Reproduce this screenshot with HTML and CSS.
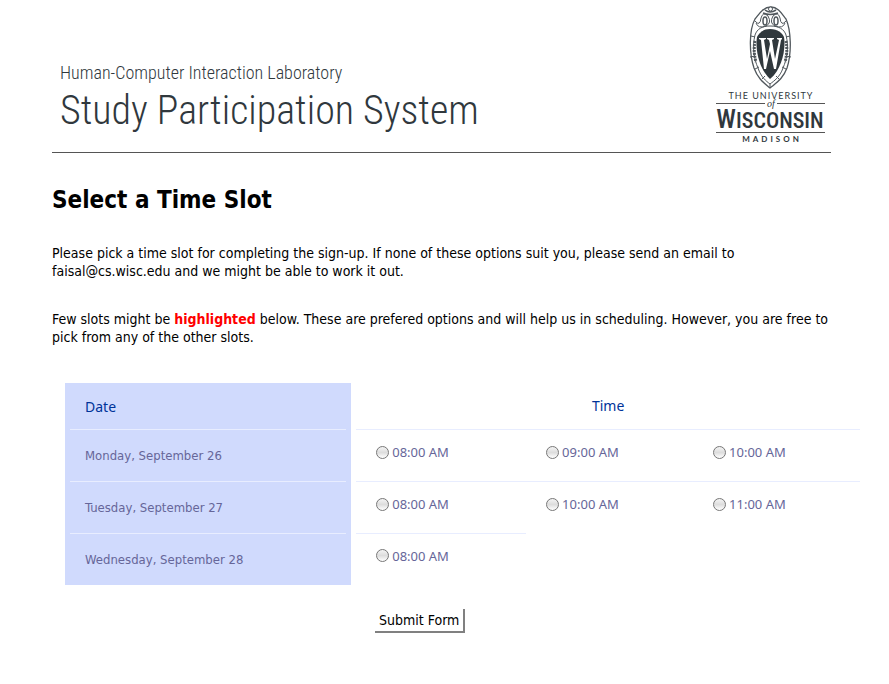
FILE: index.html
```html
<!DOCTYPE html>
<html lang="en">
<head>
<meta charset="utf-8">
<title>Study Participation System</title>
<link rel="stylesheet" href="styles.css">
</head>
<body>
<header class="masthead">
  <div class="brand">
    <p class="lab">Human-Computer Interaction Laboratory</p>
    <p class="system">Study Participation System</p>
  </div>
  <svg class="crest" viewBox="0 0 116 144" role="img" aria-label="The University of Wisconsin Madison">
    <g fill="none" stroke="#50575c" stroke-width="1">
      <path d="M58 6C50 6 46 13 42 18C36 29 36 52 41 67C45 78 51 82 57 87C63 82 70 78 74 67C79 52 78 29 73 18C69 13 65 6 58 6Z" stroke-width="1.3"/>
      <path d="M57 25C49 25 44 28 42 34C39 46 41 58 45 67C48 76 53 80 57 83C61 80 67 76 70 67C74 58 76 46 73 34C71 28 66 25 57 25Z"/>
      <path d="M42 20Q47 26 48 17Q50 10 55 15Q59 22 53 25Q45 28 43 22M73 20Q68 26 67 17Q65 10 60 15Q56 22 62 25Q70 28 72 22"/>
      <path d="M50 12Q57 15 65 12M52 9Q57 13 63 9" stroke-width="1.6"/>
      <ellipse cx="52" cy="20" rx="2" ry="4" stroke-width="1.5"/>
      <ellipse cx="63" cy="20" rx="2" ry="4" stroke-width="1.5"/>
      <path d="M38 35L42 36M37 56L42 55M42 68L46 66M49 78L52 75M77 35L73 36M78 56L73 55M73 68L69 66M66 78L63 75M57 83V87"/>
      <path d="M42 40Q40 50 43 61M73 40Q75 50 72 61" stroke-width="3" stroke-dasharray="2 1"/>
    </g>
    <circle cx="57.500" cy="8" r="2" fill="#fff" stroke="#50575c"/>
    <path d="M57 28C65 28 69 32 71 36C73 48 69 68 57 78C46 68 42 48 44 36C46 32 50 28 57 28Z" fill="#30383d"/>
    <path d="M46 37H53V38L51 39L54 58L57 43L56 39L54 38V37H61V38L59 39L62 58L66 39L64 38V37H69V38L68 39L63 68H61L57 50L53 68H51L48 39L46 38Z" fill="#fff"/>
    <g fill="#30383d" text-anchor="middle">
      <text class="crest-small" x="58" y="98">THE UNIVERSITY</text>
      <path d="M3 102.500H52M64 102.500H112M3 131.500H112" stroke="#555" stroke-width="1"/>
      <text class="crest-of" x="58" y="106">of</text>
      <text class="crest-name" x="57" y="127"><tspan class="crest-initial">W</tspan>ISCONSIN</text>
      <text class="crest-city" x="59" y="141">MADISON</text>
    </g>
  </svg>
</header>
<main>
  <h1>Select a Time Slot</h1>
  <p class="note">Please pick a time slot for completing the sign-up. If none of these options suit you, please send an email to faisal@cs.wisc.edu and we might be able to work it out.</p>
  <p class="note">Few slots might be <strong>highlighted</strong> below. These are prefered options and will help us in scheduling. However, you are free to pick from any of the other slots.</p>
  <form>
    <table>
      <colgroup><col class="date-col"><col class="first-col"><col class="slot-col"><col class="slot-col"></colgroup>
      <thead>
        <tr><th class="date" scope="col">Date</th><th class="first center" colspan="3" scope="colgroup">Time</th></tr>
      </thead>
      <tbody>
        <tr>
          <th class="date" scope="row">Monday, September 26</th>
          <td class="first"><label><input type="radio" name="slot" value="26-08">08:00 AM</label></td>
          <td><label><input type="radio" name="slot" value="26-09">09:00 AM</label></td>
          <td><label><input type="radio" name="slot" value="26-10">10:00 AM</label></td>
        </tr>
        <tr>
          <th class="date" scope="row">Tuesday, September 27</th>
          <td class="first"><label><input type="radio" name="slot" value="27-08">08:00 AM</label></td>
          <td class="open"><label><input type="radio" name="slot" value="27-10">10:00 AM</label></td>
          <td class="open"><label><input type="radio" name="slot" value="27-11">11:00 AM</label></td>
        </tr>
        <tr>
          <th class="date" scope="row">Wednesday, September 28</th>
          <td class="first"><label><input type="radio" name="slot" value="28-08">08:00 AM</label></td>
        </tr>
      </tbody>
    </table>
    <button type="submit">Submit Form</button>
  </form>
</main>
</body>
</html>
```
FILE: styles.css
```css
body {
  margin: 0;
  background: #fff;
  color: #000;
  font-family: Tahoma, "DejaVu Sans Condensed", "Noto Sans", sans-serif;
  font-size: 14px;
  line-height: 18px;
}

.masthead {
  display: flex;
  justify-content: space-between;
  align-items: flex-end;
  margin: 0 58px 0 52px;
  border-bottom: 1px solid #555;
  padding: 1px 2px 7px 8px;
  color: #30383d;
}

.brand {
  padding-bottom: 8px;
  font-family: "Roboto Condensed", "Liberation Sans Narrow", sans-serif;
  font-weight: 300;
  white-space: nowrap;
}

.brand p { margin: 0; }

.lab {
  font-size: 18px;
  line-height: 24px;
}

.system {
  font-size: 40px;
  line-height: 52px;
}

.crest {
  flex: none;
  width: 116px;
  height: 144px;
}

.crest text { font-family: Lato, sans-serif; }
.crest .crest-small { font-size: 9px; letter-spacing: 1px; }
.crest .crest-of { font: italic 10px "Liberation Serif", serif; }
.crest .crest-name { font-family: "Roboto Condensed", sans-serif; font-size: 22px; font-weight: 500; }
.crest .crest-initial { font-size: 26px; }
.crest .crest-city { font-size: 8px; font-weight: 700; letter-spacing: 3px; }

main { padding: 32px 29px 48px 52px; }

h1 {
  margin: 0 0 29px;
  font-size: 24px;
  line-height: 30px;
}

.note {
  max-width: 780px;
  margin: 0 0 30px;
}

strong { color: #f00; }

form { margin-left: 13px; }

table {
  width: 100%;
  margin-top: 37px;
  border-collapse: separate;
  border-spacing: 0;
  table-layout: fixed;
  font-family: "Lucida Sans", "Noto Sans", sans-serif;
  font-size: 13px;
  color: #669;
}

.date-col { width: 36%; }
.first-col { width: 22%; }
.slot-col { width: 21%; }

th,
td {
  box-sizing: border-box;
  height: 52px;
  padding: 0 20px;
  background: linear-gradient(#e8edff, #e8edff) bottom / 100% 1px no-repeat;
  text-align: left;
  font-weight: 400;
}

td { padding-bottom: 8px; }

.date {
  padding: 0 15px;
  border-right: 5px solid #d0dafd;
  border-left: 5px solid #d0dafd;
  background-color: #d0dafd;
}

thead th {
  height: 47px;
  padding-bottom: 2px;
  color: #039;
  font-size: 14px;
}

tbody .date { font-family: "Lucida Sans", "DejaVu Sans Condensed", sans-serif; }

.first { border-left: 5px solid transparent; }
.center { text-align: center; }
.open,
tbody tr:last-child > * { background-image: none; }
tbody tr:last-child > * { height: 51px; }

label {
  display: flex;
  align-items: center;
  gap: 3px;
}

input {
  appearance: none;
  box-sizing: border-box;
  width: 13px;
  height: 13px;
  margin: 0;
  border: 1px solid #777;
  border-radius: 50%;
  background: linear-gradient(#f4f4f4, #ddd 50%, #fff);
}

input:checked { box-shadow: inset 0 0 0 3px #fff; background: #333; }

button {
  display: block;
  margin: 24px auto 0 310px;
  padding: 1px 4px;
  border: 0 solid #808080;
  border-width: 0 2px 2px 0;
  background: #fff;
  font: inherit;
  line-height: 20px;
}
```
